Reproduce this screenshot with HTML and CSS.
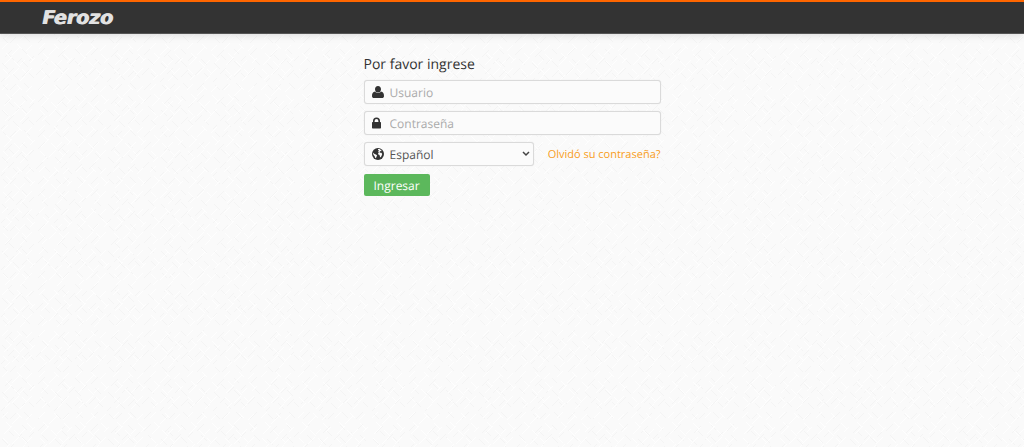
FILE: index.html
```html
<!DOCTYPE html>
<html lang="es">
<head>
    <meta charset="UTF-8">
    <meta name="viewport" content="width=device-width, initial-scale=1.0">
    <title>Ferozo</title>
    <link rel="stylesheet" href="styles.css">
</head>
<body>
    <header class="navbar">
        <a class="brand" href="#">Ferozo</a>
    </header>

    <main class="login">
        <h1>Por favor ingrese</h1>
        <form class="login-form">
            <div class="field">
                <label for="usuario" aria-label="Usuario">
                    <svg class="icon" viewBox="0 0 12 12"><path d="M6 0C7.900 0 9 1.300 9 3.200S7.700 6.600 6 6.600 3 5.100 3 3.200 4.100 0 6 0zM3.100 5.600C3.900 6.700 4.900 7.100 6 7.100s2.100-.4 2.900-1.500C11.200 5.900 12 7.600 12 9.900c0 1.300-.8 2.100-2 2.100H2c-1.200 0-2-.8-2-2.100 0-2.300.8-4 3.100-4.300z"/></svg>
                </label>
                <input type="text" id="usuario" placeholder="Usuario">
            </div>
            <div class="field">
                <label for="clave" aria-label="Contraseña">
                    <svg class="icon" viewBox="0 0 12 12"><path fill-rule="evenodd" d="M1 5V4a3.500 3.500 0 0 1 7 0v1h.3c.5 0 .7.300.7.700v5c0 .5-.2.800-.7.800H.7c-.5 0-.7-.3-.7-.8v-5C0 5.300.2 5 .7 5zM2.600 5h3.800V4a1.900 1.900 0 0 0-3.800 0z"/></svg>
                </label>
                <input type="password" id="clave" placeholder="Contraseña">
            </div>
            <div class="row">
                <div class="field field-lang">
                    <label for="idioma" aria-label="Idioma">
                        <svg class="icon" viewBox="0 0 12 12">
                            <circle cx="6" cy="6" r="6"/>
                            <path class="land" d="M5.900 1 7.600 1.100 8.900 1.900 9.700 2.900 8.900 3.300 8.300 3.100 7.500 3.900 8 4.700 9.400 4.800 10.200 5.900 9.600 7.800 8.600 9.400 7.900 8.600 7.500 6.900 6.300 6.500 6.100 5.200 6.900 4.300 6.100 3.600 7 2.600 6.100 2.100zM1.300 4.700 2.500 5.900 4 6.400 5.100 7.500 4.500 8.800 3.900 10.300 3 9.600 2.700 8.200 1.600 6.900 1.100 5.800z"/>
                        </svg>
                    </label>
                    <select id="idioma">
                        <option>Español</option>
                        <option>English</option>
                        <option>Português</option>
                    </select>
                    <svg class="caret" viewBox="0 0 8 6"><path d="M1 1l3 3 3-3"/></svg>
                </div>
                <a class="forgot" href="#">Olvidó su contraseña?</a>
            </div>
            <button type="submit" class="btn">Ingresar</button>
        </form>
    </main>
</body>
</html>
```
FILE: styles.css
```css
* {
    box-sizing: border-box;
}

body {
    margin: 0;
    min-height: 100vh;
    font-family: "Open Sans", sans-serif;
    font-size: 12px;
    text-rendering: geometricPrecision;
    color: #333;
    background-color: #fafafa;
    background-image:
        url("data:image/svg+xml,%3Csvg xmlns='http://www.w3.org/2000/svg' width='37' height='41' fill='none' stroke='%23fefefe'%3E%3Cpath d='M2 8l6-6M12 14l8-8M26 10l6-6M4 24l8-8M20 24l5-5M30 22l5-5M12 34l7-7M25 34l7-7M6 12l5 5M17 3l5 5M27 13l6 6M14 20l6 6M3 28l5 5M22 28l4 4M5 39l5-5M20 40l5-5'/%3E%3C/svg%3E"),
        url("data:image/svg+xml,%3Csvg xmlns='http://www.w3.org/2000/svg' width='53' height='47' fill='none' stroke='%23f4f4f4'%3E%3Cpath d='M5 10l7-7M16 17l6-6M29 14l5-5M8 27l6-6M22 30l7-7M1 35l4-4M9 8l5 5M22 2l5 5M22 14l6 6M2 16l6 6M13 27l6 6M29 26l5 5M38 8l7-7M42 12l6 6M36 28l7-7M45 26l5 5M10 43l6-6M24 36l6 6M38 43l7-7M3 38l5 5'/%3E%3C/svg%3E");
}

.navbar {
    display: flex;
    align-items: center;
    height: 34px;
    padding: 0 42px;
    background: #333;
    border-top: 2px solid #f60;
    border-bottom: 1px solid #555;
    box-shadow: 0 1px 8px rgba(0, 0, 0, 0.12);
}

.brand {
    font-family: "DejaVu Sans", sans-serif;
    font-size: 19px;
    font-weight: bold;
    font-style: italic;
    line-height: 20px;
    color: #e2e2e2;
    text-shadow: 1px 0 #e2e2e2;
    text-decoration: none;
}

.login {
    width: 100%;
    max-width: 297px;
    margin: 0 auto;
    padding-top: 20px;
}

h1 {
    margin: 0 0 4px;
    font-size: 14px;
    font-weight: normal;
    line-height: 22px;
}

.login-form {
    display: flex;
    flex-direction: column;
    align-items: flex-start;
    gap: 7px;
}

.field {
    position: relative;
    display: flex;
    align-items: center;
    width: 100%;
    height: 24px;
    background: #fbfbfb;
    border: 1px solid #dadada;
    border-radius: 3px;
    box-shadow: 0 0 1px #ddd;
}

.field label {
    display: flex;
    padding-left: 7px;
}

.icon {
    width: 12px;
    height: 12px;
    fill: #333;
}

.icon .land {
    fill: #fbfbfb;
}

.field input,
.field select {
    flex: 1;
    min-width: 0;
    height: 22px;
    padding: 0 6px;
    border: none;
    outline: none;
    background: transparent;
    font: inherit;
    text-rendering: inherit;
    color: #555;
}

.field select {
    appearance: none;
}

.field input::placeholder {
    color: #aaa;
}

.caret {
    position: absolute;
    right: 3px;
    width: 8px;
    height: 6px;
    fill: none;
    stroke: #444;
    stroke-width: 1.5;
    pointer-events: none;
}

.row {
    display: flex;
    align-items: center;
    justify-content: space-between;
    width: 100%;
}

.field-lang {
    width: 170px;
}

.forgot {
    font-size: 11px;
    color: #f89d1c;
    text-decoration: none;
}

.btn {
    height: 22px;
    margin-top: 1px;
    padding: 0 10px;
    border: none;
    border-radius: 2px;
    background: #5cb85c;
    font: inherit;
    text-rendering: inherit;
    color: #fff;
    cursor: pointer;
}
```
